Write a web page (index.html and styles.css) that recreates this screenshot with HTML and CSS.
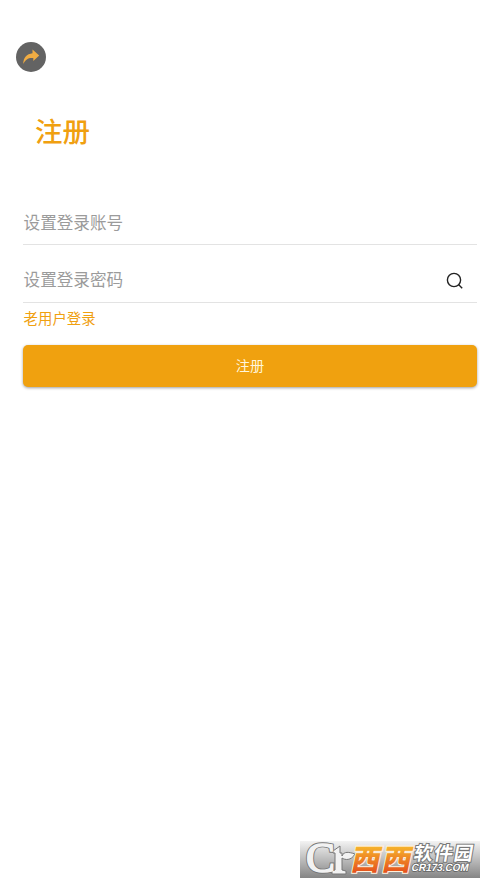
FILE: index.html
```html
<!DOCTYPE html>
<html lang="zh-CN">
<head>
<meta charset="utf-8">
<title>注册</title>
<link rel="stylesheet" href="styles.css">
</head>
<body>
<main class="page">
  <button class="back" aria-label="返回">
    <svg width="30" height="30" viewBox="0 0 30 30"><path d="M7.3 22C7.2 15.5 10.8 12 16.5 11.3V7.6L23.2 13.5L17.3 18.9V16C12.7 15.4 9.8 17 7.3 22Z" fill="#f0ac43"/></svg>
  </button>
  <h1 class="title">注册</h1>
  <form class="form">
    <div class="field"><span>设置登录账号</span></div>
    <div class="field">
      <span>设置登录密码</span>
      <svg class="search" width="18" height="18" viewBox="0 0 18 18"><circle cx="8" cy="8" r="6.6"/><path d="M12.5 12.6L16.2 16.2"/></svg>
    </div>
    <a class="login">老用户登录</a>
    <button class="submit" type="button">注册</button>
  </form>
  <footer class="brand">
    <svg width="180" height="37" viewBox="0 0 180 37">
      <defs>
        <linearGradient id="fire" x1="0" y1="0" x2="0" y2="1"><stop offset="0.25" stop-color="#f6b52c"/><stop offset="0.9" stop-color="#e44e1c"/></linearGradient>
      </defs>
      <g class="mark">
        <text class="outline" x="6" y="31" font-size="43" textLength="29" lengthAdjust="spacingAndGlyphs">C</text>
        <path d="M33 10L40 5V12H42V15C44 10 49 11 55 13C51 20 45 19 42 17V29L46 30V33H32V30L35 29V12H33Z"/>
        <text class="face" x="6" y="31" font-size="43" textLength="29" lengthAdjust="spacingAndGlyphs">C</text>
      </g>
      <g transform="translate(50 28.5) skewX(-12)">
        <text class="orange" x="0" y="0" font-size="29" textLength="60">西西</text>
      </g>
      <g transform="translate(113 19) skewX(-10)"><text class="soft" x="0" y="0" font-size="19" textLength="59">软件园</text></g>
      <g transform="translate(111 30) skewX(-12)"><text class="site" x="0" y="0" font-size="10.5" textLength="57" lengthAdjust="spacingAndGlyphs">CR173.COM</text></g>
    </svg>
  </footer>
</main>
</body>
</html>
```
FILE: styles.css
```css
* { box-sizing: border-box; }
body { margin: 0; background: #fff; font-family: "Noto Sans CJK SC", sans-serif; }
.page { display: flex; flex-direction: column; width: 500px; height: 888px; padding: 42px 0 10px; }
.back { width: 30px; height: 30px; margin-left: 15.5px; padding: 0; border: 0; border-radius: 50%; background: #636363; }
.back svg { display: block; }
.title { margin: 38px 0 0 35px; font-size: 27.5px; line-height: 40px; font-weight: 500; color: #f0a010; }
.form { display: flex; flex-direction: column; margin: 51px 23px 0 23px; }
.field { display: flex; align-items: center; justify-content: space-between; height: 58px; padding: 15px 13px 4px .6px; border-bottom: 1px solid #e3e3e3; font-size: 16.6px; color: #9b9b9b; }
.field:first-child { height: 44px; padding: 0 0 2px .6px; }
.search { position: relative; top: 2px; fill: none; stroke: #222; stroke-width: 1.4; }
.login { margin: 5px 0 0 .6px; font-size: 14.4px; line-height: 20px; color: #f0a010; }
.submit { height: 42px; margin-top: 17px; padding: 0 0 2px; border: 0; border-radius: 5px; background: #f0a10f; box-shadow: 0 1px 3px rgba(0,0,0,.38); color: #fff6dc; font: 14.2px/40px "Noto Sans CJK SC", sans-serif; }
.brand { width: 180px; height: 37px; margin: auto 0 0 300px; background: linear-gradient(#f3f3f3, #858585); }
.brand svg { display: block; overflow: visible; }
.mark { fill: #f2f2f2; stroke: #777; stroke-width: 1; font-family: "Liberation Serif", serif; }
.outline { stroke-width: 3.4; }
.face { stroke: #f2f2f2; stroke-width: 1.6; }
.orange { fill: url(#fire); stroke: #fff1dc; stroke-width: 2; paint-order: stroke; font-weight: 900; }
.soft { fill: #fff; stroke: #777; stroke-width: 2; paint-order: stroke; font-weight: 700; }
.site { fill: #fff; stroke: #666; stroke-width: 1.6; paint-order: stroke; font-family: "Liberation Sans", sans-serif; font-weight: 700; }
```
